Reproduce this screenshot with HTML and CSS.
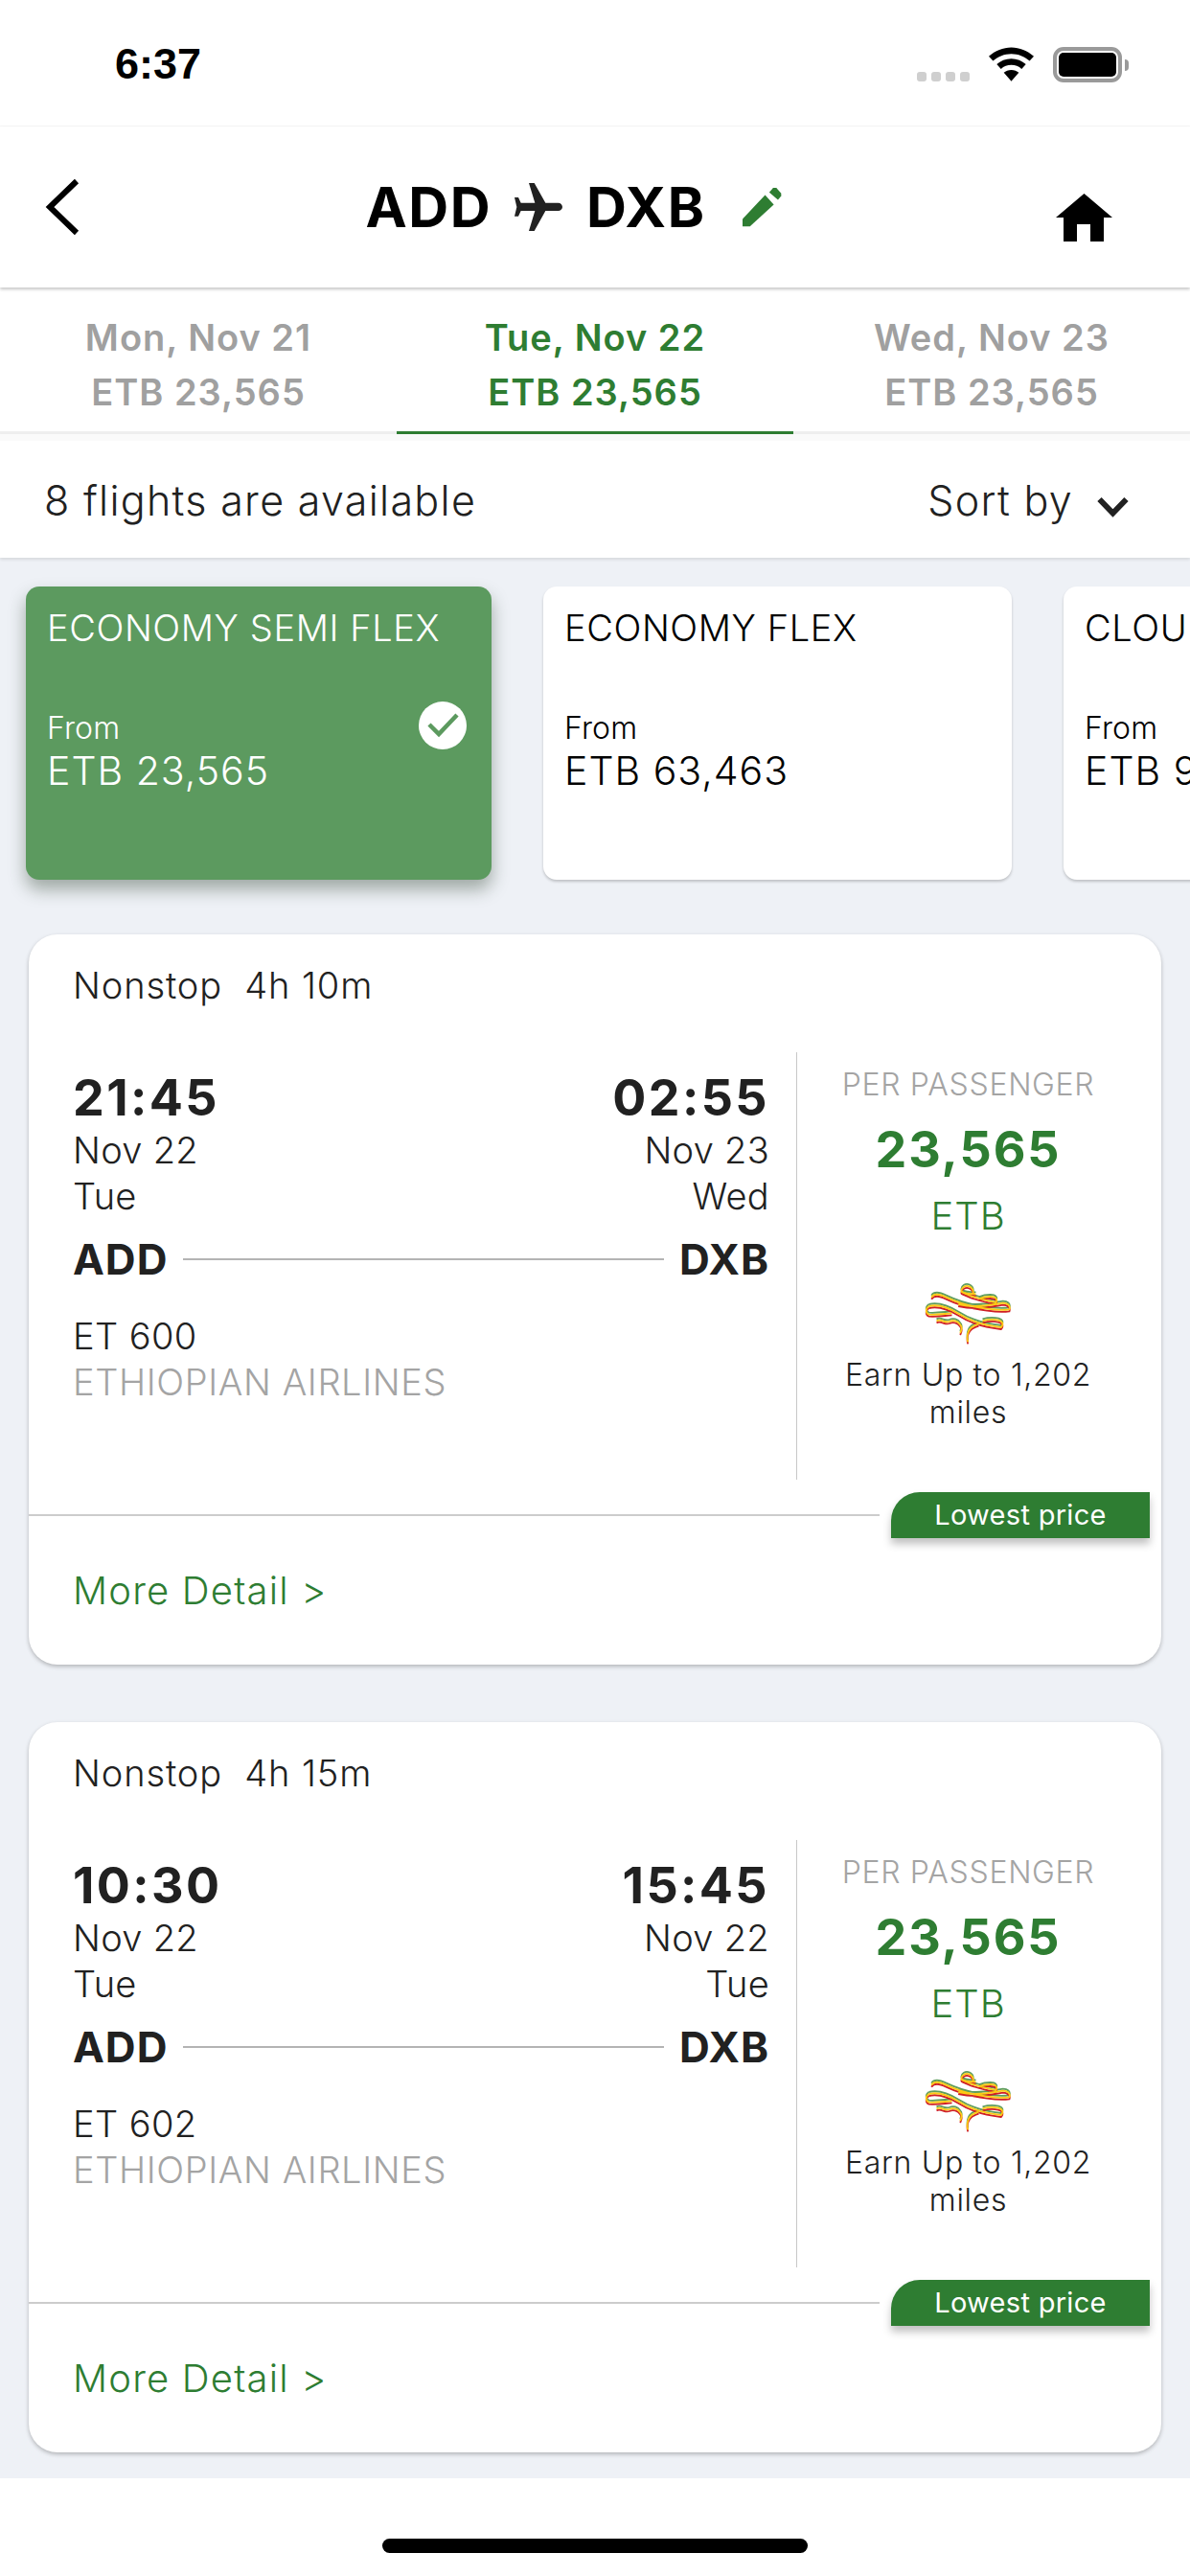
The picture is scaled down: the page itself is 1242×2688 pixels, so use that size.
FILE: index.html
```html
<!DOCTYPE html>
<html lang="en">
<head>
<meta charset="utf-8">
<title>Flights ADD to DXB</title>
<link rel="stylesheet" href="styles.css">
</head>
<body>
<svg class="defs" width="0" height="0" aria-hidden="true">
  <defs>
    <g id="ribbon">
      <path d="M205 62C190 62 172 62 160 54 158 42 172 34 184 38 194 42 198 52 196 62"/>
      <path d="M160 54C178 66 210 76 268 88 274 78 268 70 250 70 238 70 226 72 216 76"/>
      <path d="M66 72C74 60 92 62 112 72 150 90 190 102 240 108 270 112 296 112 310 110 314 98 304 90 290 90 262 94 236 100 205 100 186 100 168 98 150 94"/>
      <path d="M58 100C90 92 126 108 152 124 186 146 226 160 284 166 292 158 290 148 276 144 258 140 240 142 226 146"/>
      <path d="M58 100C46 108 48 122 58 126 80 128 104 124 130 122"/>
      <path d="M82 146C96 138 108 154 122 148 134 142 148 146 156 158 164 166 160 176 156 184"/>
      <path d="M180 212C176 194 178 178 192 166 198 162 206 158 214 156"/>
    </g>
    <symbol id="tree" viewBox="45 28 275 192">
      <g fill="none" stroke-width="5.500">
        <use href="#ribbon" stroke="#5f9d5c" transform="translate(0 -6)"/>
        <use href="#ribbon" stroke="#cf1f26" transform="translate(0 6)"/>
        <use href="#ribbon" stroke="#fdc915"/>
      </g>
    </symbol>
  </defs>
</svg>

<header class="status">
  <span class="clock">6:37</span>
  <div class="status-icons">
    <div class="dots"><i></i><i></i><i></i><i></i></div>
    <svg class="wifi" viewBox="0 0 48 36"><path d="M24 0C15 0 7 3.500 0 9.500l4.500 5C10 9.800 16.600 7 24 7s14 2.800 19.500 7.500l4.500-5C41 3.500 33 0 24 0z"/><path d="M24 12c-6 0-11.500 2.200-15.500 6l4.500 5c3-2.700 6.800-4.200 11-4.200s8 1.500 11 4.200l4.500-5c-4-3.800-9.500-6-15.500-6z"/><path d="M24 24c-3.200 0-6 1.200-8 3l8 9 8-9c-2-1.800-4.800-3-8-3z"/></svg>
    <div class="battery"><b></b></div>
    <span class="battery-cap"></span>
  </div>
</header>

<nav class="topbar">
  <svg class="back" viewBox="0 0 36 60"><path d="M33 3 5 30l28 27" /></svg>
  <div class="route">
    <span>ADD</span>
    <svg class="plane" viewBox="528 93 150 150"><path d="M573 93h17l35 62h40c7 0 13 6 13 13s-6 12-13 12h-40l-35 63h-17l19-63h-44l-8 17h-12l7-29-7-30h12l8 17h44z"/></svg>
    <span>DXB</span>
    <svg class="pencil" viewBox="1235 105 122 125"><path d="M1235 205l70-75 27 30-74 68h-23z"/><path d="M1318 122l12-14h10l15 17v8l-10 12z"/></svg>
  </div>
  <svg class="home" viewBox="0 0 59 50"><path d="M29.500 0 59 25h-9v25H36V32H22v18H8V25H0z"/></svg>
</nav>

<section class="tabs">
  <div class="tab"><span>Mon, Nov 21</span><span>ETB 23,565</span></div>
  <div class="tab active"><span>Tue, Nov 22</span><span>ETB 23,565</span></div>
  <div class="tab"><span>Wed, Nov 23</span><span>ETB 23,565</span></div>
</section>

<section class="sortbar">
  <span>8 flights are available</span>
  <div class="sort">
    <span>Sort by</span>
    <svg class="chev" viewBox="0 0 33 22"><path d="M2.500 3l14 14.500L30.500 3"/></svg>
  </div>
</section>

<main class="content">
  <div class="fares">
    <article class="fare selected">
      <h3>ECONOMY SEMI FLEX</h3>
      <p class="from">From</p>
      <p class="amount">ETB 23,565</p>
      <svg class="check" viewBox="0 0 50 50"><circle cx="25" cy="25" r="25" fill="#fff"/><path d="M11 24l10 10L40 14" fill="none" stroke="#5c9a5f" stroke-width="4.500"/></svg>
    </article>
    <article class="fare">
      <h3>ECONOMY FLEX</h3>
      <p class="from">From</p>
      <p class="amount">ETB 63,463</p>
    </article>
    <article class="fare">
      <h3>CLOUD NINE</h3>
      <p class="from">From</p>
      <p class="amount">ETB 94,120</p>
    </article>
  </div>

  <article class="flight">
    <p class="duration">Nonstop&nbsp; 4h 10m</p>
    <div class="flight-body">
      <div class="itinerary">
        <div class="ends">
          <div><strong>21:45</strong><p>Nov 22</p><p>Tue</p></div>
          <div class="arrive"><strong>02:55</strong><p>Nov 23</p><p>Wed</p></div>
        </div>
        <div class="airports"><b>ADD</b><i></i><b>DXB</b></div>
        <p class="number">ET 600</p>
        <p class="carrier">ETHIOPIAN AIRLINES</p>
      </div>
      <div class="price">
        <p class="per">PER PASSENGER</p>
        <p class="value">23,565</p>
        <p class="currency">ETB</p>
        <svg class="tree"><use href="#tree"/></svg>
        <p class="miles">Earn Up to 1,202 miles</p>
      </div>
    </div>
    <div class="rule"></div>
    <span class="badge">Lowest price</span>
    <p class="more">More Detail &gt;</p>
  </article>

  <article class="flight">
    <p class="duration">Nonstop&nbsp; 4h 15m</p>
    <div class="flight-body">
      <div class="itinerary">
        <div class="ends">
          <div><strong>10:30</strong><p>Nov 22</p><p>Tue</p></div>
          <div class="arrive"><strong>15:45</strong><p>Nov 22</p><p>Tue</p></div>
        </div>
        <div class="airports"><b>ADD</b><i></i><b>DXB</b></div>
        <p class="number">ET 602</p>
        <p class="carrier">ETHIOPIAN AIRLINES</p>
      </div>
      <div class="price">
        <p class="per">PER PASSENGER</p>
        <p class="value">23,565</p>
        <p class="currency">ETB</p>
        <svg class="tree"><use href="#tree"/></svg>
        <p class="miles">Earn Up to 1,202 miles</p>
      </div>
    </div>
    <div class="rule"></div>
    <span class="badge">Lowest price</span>
    <p class="more">More Detail &gt;</p>
  </article>
</main>

<footer class="homebar"><i></i></footer>
</body>
</html>
```
FILE: styles.css
```css
* { box-sizing: border-box; }
html, body { margin: 0; padding: 0; }
body {
  width: 1242px;
  height: 2688px;
  overflow: hidden;
  background: #fff;
  font-family: Inter, Roboto, sans-serif;
  font-weight: 300;
  color: #212121;
  display: flex;
  flex-direction: column;
}
p, h3 { margin: 0; font-weight: 300; }
.defs { position: absolute; }

.status {
  flex: none;
  height: 132px;
  display: flex;
  justify-content: space-between;
  padding: 45px 64px 0 120px;
  border-bottom: 1px solid #f6f6f6;
}
.clock {
  font: 700 45px/47px "Liberation Sans", Arial, sans-serif;
  color: #000;
  margin-top: -2px;
}
.status-icons { display: flex; align-items: flex-start; }
.dots { display: flex; gap: 5px; margin-top: 30px; margin-right: 20px; }
.dots i { width: 10px; height: 10px; background: #cfcfcf; border-radius: 3px; }
.wifi { width: 47px; height: 36px; fill: #000; margin-top: 4px; }
.battery {
  width: 72px; height: 37px; margin-left: 20px; margin-top: 4px;
  border: 4px solid #9a9a9a; border-radius: 11px; padding: 2px;
}
.battery b { display: block; height: 100%; background: #000; border-radius: 5px; }
.battery-cap {
  width: 4px; height: 12px; background: #9a9a9a; margin: 17px 0 0 3px;
  border-radius: 0 4px 4px 0;
}

.topbar {
  height: 168px;
  flex: none;
  position: relative;
  display: flex;
  align-items: center;
  justify-content: center;
  box-shadow: 0 2px 3px rgba(0,0,0,.22);
  z-index: 3;
  background: #fff;
}
.back {
  position: absolute; left: 47px; top: 54px;
  width: 36px; height: 60px; fill: none; stroke: #000; stroke-width: 6;
}
.home { position: absolute; left: 1102px; top: 70px; width: 59px; height: 50px; fill: #000; }
.route {
  display: flex; align-items: center;
  font: 700 58px/68px Inter, Roboto, sans-serif;
  letter-spacing: 1.500px;
  color: #000;
  margin-left: -45px;
}
.plane { width: 50px; height: 50px; fill: #212121; margin: 0 25px 0 24px; }
.pencil { width: 41px; height: 42px; fill: #2e7d32; margin-left: 38px; }

.tabs {
  height: 153px;
  flex: none;
  display: grid;
  grid-template-columns: repeat(3, 1fr);
  background: #fff;
  border-bottom: 3px solid #eeeeee;
}
.tab {
  display: flex; flex-direction: column; align-items: center;
  padding-top: 24px;
  font: 600 38px/57px Inter, Roboto, sans-serif;
  letter-spacing: 1px;
  color: #a0a0a0;
  height: 153px;
}
.tab.active { color: #2e7d32; border-bottom: 3px solid #2e7d32; }

.sortbar {
  height: 129px;
  flex: none;
  display: flex;
  align-items: center;
  justify-content: space-between;
  padding: 2px 64px 0 46px;
  font-size: 43px;
  letter-spacing: 1.300px;
  box-shadow: 0 2px 3px rgba(0,0,0,.1);
  border-top: 7px solid #fafafa;
  z-index: 2;
  background: #fff;
}
.sort { display: flex; align-items: center; gap: 25px; }
.chev { width: 33px; height: 22px; fill: none; stroke: #212121; stroke-width: 6; margin-top: 14px; }

.content {
  flex: 1;
  background: #eef1f6;
  padding: 30px 0 0;
  overflow: hidden;
  min-height: 0;
}
.fares { display: flex; gap: 54px; padding-left: 27px; height: 306px; }
.fare {
  flex: none;
  width: 489px;
  height: 306px;
  background: #fff;
  border-radius: 14px;
  padding: 20px 22px;
  box-shadow: 0 2px 3px rgba(0,0,0,.2);
  position: relative;
  color: #000;
}
.fare h3 { font-size: 38px; line-height: 46px; margin-bottom: 62px; letter-spacing: .6px; }
.fare .from { font-size: 32px; line-height: 40px; letter-spacing: .2px; }
.fare .amount { font-size: 41px; line-height: 52px; margin-top: -2px; letter-spacing: 1px; }
.fare.selected { background: #5c9a5f; color: #fff; box-shadow: 0 10px 18px rgba(40,60,40,.4); width: 486px; }
.check { position: absolute; right: 26px; top: 120px; width: 50px; height: 50px; }

.flight {
  position: relative;
  margin: 57px 30px 0;
  height: 762px;
  background: #fff;
  border-radius: 30px;
  box-shadow: 0 2px 4px rgba(0,0,0,.25);
  padding-top: 31px;
}
.flight + .flight { margin-top: 60px; }
.duration { font-size: 38px; line-height: 44px; padding-left: 46px; letter-spacing: .9px; }
.flight-body { display: flex; margin-top: 48px; height: 446px; padding-left: 46px; }
.itinerary { width: 727px; padding-top: 18px; flex: none; }
.ends { display: flex; justify-content: space-between; }
.ends strong { display: block; font: 700 52px/60px Inter, Roboto, sans-serif; letter-spacing: 2.400px; }
.ends p { font-size: 38px; line-height: 48px; letter-spacing: .3px; }
.arrive { text-align: right; }
.airports { display: flex; align-items: center; gap: 16px; margin-top: 16px; }
.airports b { font: 700 44px/52px Inter, Roboto, sans-serif; letter-spacing: 1px; }
.airports i { flex: 1; height: 2px; background: #b4b4b4; }
.number { font-size: 38px; line-height: 48px; margin-top: 30px; letter-spacing: .4px; }
.carrier { font-size: 38px; line-height: 48px; color: #a4a4a4; letter-spacing: .6px; }
.price {
  margin-left: 28px;
  flex: 1;
  border-left: 1px solid #c8c8c8;
  display: flex; flex-direction: column; align-items: center;
  padding: 14px 23px 0 0;
  text-align: center;
}
.per { font-size: 32px; line-height: 40px; color: #a4a4a4; letter-spacing: .7px; }
.value { font: 700 52px/60px Inter, Roboto, sans-serif; color: #2e7d32; margin-top: 18px; letter-spacing: 1.900px; }
.currency { font-size: 40px; line-height: 48px; color: #2e7d32; margin-top: 15px; letter-spacing: 1px; }
.tree { width: 92px; height: 64px; margin-top: 46px; }
.miles { font-size: 32px; line-height: 39px; margin-top: 12px; width: 300px; letter-spacing: .7px; }
.rule { height: 2px; background: #cccccc; width: 888px; margin-top: 36px; }
.badge {
  position: absolute; right: 12px; top: 582px;
  width: 270px; height: 48px;
  background: #2e7d32; color: #fff;
  font-weight: 400;
  border-radius: 30px 0 0 0;
  font-size: 29px; line-height: 48px; text-align: center;
  letter-spacing: .3px;
  box-shadow: 0 6px 8px rgba(0,0,0,.25);
}
.more { color: #2e7d32; font-size: 40px; line-height: 46px; padding: 55px 0 0 46px; letter-spacing: 1.200px; }

.homebar {
  height: 102px;
  flex: none;
  display: flex;
  justify-content: center;
  padding-top: 63px;
  background: #fff;
}
.homebar i { width: 444px; height: 15px; background: #000; border-radius: 8px; }
```
